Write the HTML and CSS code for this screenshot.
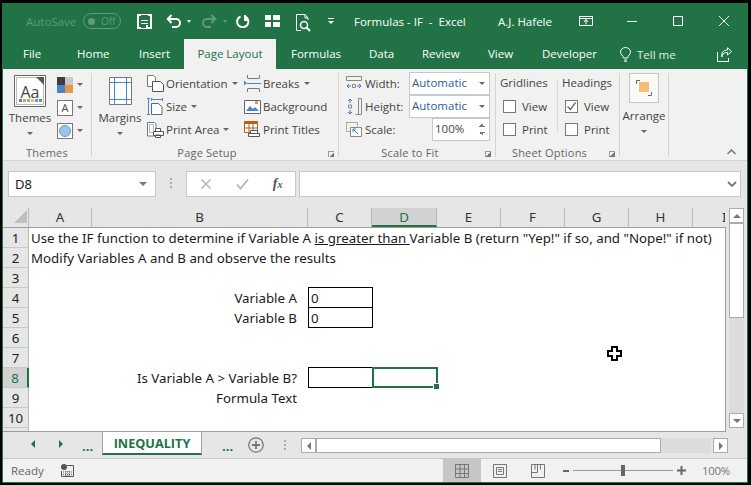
FILE: index.html
```html
<!DOCTYPE html>
<html lang="en">
  <head>
    <meta charset="UTF-8" />
    <title>Formulas - IF - Excel</title>
    <link rel="stylesheet" href="styles.css">
  </head>
  <body>
    <div class="window">
      <div class="titlebar">
        <span class="autosave">AutoSave</span>
        <span class="toggle"><i></i>Off</span>
        <svg class="q q-save" width="15" height="15" viewBox="0 0 15 15"><path d="M1 1h13v13H1z" fill="none" stroke="#fff" stroke-width="2"/><path d="M4 1h7v5H4zM4 10h7v4H4z" fill="#217346"/><path d="M4 6h7v1H4zM4 9h7v1H4zM9 11h2v3H9z" fill="#fff"/></svg>
        <svg class="q q-undo" width="15" height="14" viewBox="0 0 15 14"><path d="M2 5h8a3.500 3.500 0 0 1 0 8H6M5.500 1 1.800 5l3.700 4" fill="none" stroke="#fff" stroke-width="2"/></svg>
        <span class="qcaret"></span>
        <svg class="q q-redo" width="15" height="14" viewBox="0 0 15 14"><path d="M13 5H5a3.500 3.500 0 0 0 0 8h4M9.500 1l3.700 4-3.700 4" fill="none" stroke="#5f9a7b" stroke-width="2"/></svg>
        <span class="qcaret dim"></span>
        <svg class="q q-repeat" width="14" height="14" viewBox="0 0 14 14"><path d="M4.500 2.500a5.600 5.600 0 1 0 4.500 0M9 1v5h4" fill="none" stroke="#fff" stroke-width="2"/></svg>
        <svg class="q q-form" width="15" height="12" viewBox="0 0 15 12"><path d="M0 0h6v5H0zM8 0h7v5H8zM0 7h6v5H0zM8 7h7v5H8z" fill="#fff"/></svg>
        <svg class="q q-preview" width="15" height="18" viewBox="0 0 15 18"><path d="M9 .5H.5v16H5M9 .5 12 4v2M9 .5V4h3" fill="none" stroke="#fff"/><circle cx="8" cy="11" r="3.500" fill="none" stroke="#fff" stroke-width="1.500"/><path d="m10.500 13.500 3.500 3.500" stroke="#fff" stroke-width="2"/></svg>
        <span class="qmore"></span>
        <span class="doc">Formulas - IF&nbsp; -&nbsp; Excel</span>
        <span class="user">A.J. Hafele</span>
        <svg class="q q-display" width="14" height="10" viewBox="0 0 14 10"><path d="M.5.500h13v9H.5zM.5 2.500h13" fill="none" stroke="#fff"/><path d="M7 3.500v5M5 6l2-2.500L9 6" fill="none" stroke="#fff"/></svg>
        <svg class="q q-min" width="10" height="10" viewBox="0 0 10 10"><path d="M0 5.500h10" stroke="#fff"/></svg>
        <svg class="q q-max" width="10" height="10" viewBox="0 0 10 10"><path d="M.5.500h9v9h-9z" fill="none" stroke="#fff"/></svg>
        <svg class="q q-close" width="10" height="10" viewBox="0 0 10 10"><path d="m0 0 10 10M10 0 0 10" stroke="#fff"/></svg>
      </div>

      <div class="tabs">
        <span class="tab tab-file">File</span>
        <span class="tab tab-home">Home</span>
        <span class="tab tab-insert">Insert</span>
        <span class="tab active">Page Layout</span>
        <span class="tab tab-formulas">Formulas</span>
        <span class="tab tab-data">Data</span>
        <span class="tab tab-review">Review</span>
        <span class="tab tab-view">View</span>
        <span class="tab tab-dev">Developer</span>
        <svg class="bulb" width="11" height="15" viewBox="0 0 11 15"><path d="M3.500 11C3 8.500.5 7.500.5 5a5 4.500 0 0 1 10 0c0 2.500-2.500 3.500-3 6zM4 13h3M4.500 14.500h2" fill="none" stroke="#fff"/></svg>
        <span class="tellme">Tell me</span>
        <svg class="share" width="15" height="15" viewBox="0 0 15 15"><path d="M.5 5v9.500h11V11M5 10c0-3 2-4.500 5.500-4.500V8L14.500 4.500 10.500.8V3C6 3 4 6 5 10z" fill="none" stroke="#fff"/></svg>
      </div>

      <div class="ribbon">
        <section class="group g-themes">
          <div class="group-body">
            <div class="big b-themes">
              <svg class="aa" width="32" height="32" viewBox="0 0 32 32"><path d="M.5.500h31v31H.5z" fill="#fff" stroke="#666"/><path d="M2.500 2.500h27v27h-27z" fill="#fff" stroke="#bbb"/><path d="M22 2h8v8z" fill="#555"/><path d="M5 24h3v3H5z" fill="#4a86c5"/><path d="M9 24h3v3H9z" fill="#e59a46"/><path d="M13 24h3v3h-3z" fill="#a5a5a5"/><path d="M17 24h3v3h-3z" fill="#f4c542"/><path d="M21 24h3v3h-3z" fill="#5b9bd5"/><path d="M25 24h3v3h-3z" fill="#5ca85c"/></svg>
              <span class="aa-text">Aa</span>
              <span class="big-label">Themes</span>
              <span class="caret"></span>
            </div>
            <div class="theme-opts">
              <div class="theme-opt"><svg width="16" height="16" viewBox="0 0 16 16"><path d="M0 0h8v8H0z" fill="#3f3f3f"/><path d="M8 0h8v8H8z" fill="#c8c8c8"/><path d="M0 8h8v8H0z" fill="#4a86c5"/><path d="M8 8h8v8H8z" fill="#e59a46"/></svg><span class="caret"></span></div>
              <div class="theme-opt"><span class="font-box">A</span><span class="caret"></span></div>
              <div class="theme-opt"><span class="effect-box"><i></i></span><span class="caret"></span></div>
            </div>
          </div>
          <div class="group-label">Themes</div>
        </section>

        <section class="group g-setup">
          <div class="group-body">
            <div class="big b-margins">
              <svg width="23" height="28" viewBox="0 0 23 28"><path d="M.5.500h22v27H.5z" fill="#fff" stroke="#777"/><path d="M5.500 0v28M17.500 0v28M0 5.500h23M0 22.500h23" stroke="#4a86c5"/></svg>
              <span class="big-label">Margins</span>
              <span class="caret"></span>
            </div>
            <div class="setup-col c-one">
              <div class="item"><svg width="17" height="17" viewBox="0 0 17 17"><path d="M.5.500h6l2 2v9H.5z" fill="#fff" stroke="#777"/><path d="M5.500 6.500h8l3 3v7h-11z" fill="#fff" stroke="#555"/></svg><span>Orientation</span><span class="caret"></span></div>
              <div class="item"><svg width="17" height="17" viewBox="0 0 17 17"><path d="M1.500 1v15M0 .5h3M0 16.500h3M4.500 1.500h11M4.500 0v3M15.500 0v3" stroke="#4a86c5" fill="none"/><path d="M4.500 5.500h7l3.500 3.500v7.500H4.500z" fill="#fff" stroke="#666"/></svg><span>Size</span><span class="caret"></span></div>
              <div class="item"><svg width="17" height="17" viewBox="0 0 17 17"><path d="M.5 1.500h7l1.500 1.500v12H.5z" fill="#fff" stroke="#777"/><path d="M2.500 3.500h4v8h-4z" fill="none" stroke="#4a86c5" stroke-dasharray="1 1"/><path d="M8.500 7.500h5v3h-5zM6.500 10.500h10v4h-10zM8.500 14h5v2.500h-5z" fill="#fff" stroke="#555"/></svg><span>Print Area</span><span class="caret"></span></div>
            </div>
            <div class="setup-col c-two">
              <div class="item"><svg width="17" height="17" viewBox="0 0 17 17"><path d="M3.500 0v3M15.500 0v3M3.500 3.500h12M3.500 13.500h12M3.500 14v3M15.500 14v3" stroke="#777" fill="none"/><path d="M0 5.500 3 8 0 10.500z" fill="#4a86c5"/><path d="M3 8.500h14" stroke="#4a86c5"/></svg><span>Breaks</span><span class="caret"></span></div>
              <div class="item"><svg width="17" height="14" viewBox="0 0 17 14"><path d="M.5.500h16v13H.5z" fill="#fff" stroke="#666"/><path d="m2 11 4-5 3 3 2-2 4 4z" fill="#4a86c5"/><path d="M11 1h3v3h-3z" fill="#e59a46"/></svg><span>Background</span></div>
              <div class="item"><svg width="17" height="17" viewBox="0 0 17 17"><path d="M.5.500h13v11H.5z" fill="#fff" stroke="#a5622a"/><path d="M0 0h14v3H0z" fill="#c55a11"/><path d="M5 3v8M9 3v8M0 7h13" stroke="#a5622a"/><path d="M6.500 9.500h7v3h-7zM4.500 12.500h11v3h-11z" fill="#fff" stroke="#555"/></svg><span>Print Titles</span></div>
            </div>
          </div>
          <div class="group-label">Page Setup</div>
          <span class="launcher"></span>
        </section>

        <section class="group g-scale">
          <div class="group-body scale-rows">
            <div class="scale-row">
              <svg width="16" height="15" viewBox="0 0 16 15"><path d="M.5.500h15v4M.5.500v4h15" fill="none" stroke="#888"/><path d="M1 10h4M11 10h4M1 10l2-2M1 10l2 2M15 10l-2-2M15 10l-2 2" stroke="#3f7ec0" fill="none"/><path d="M6.500 8.500h3v3h-3z" fill="none" stroke="#888"/></svg>
              <span class="scale-label">Width:</span>
              <span class="combo">Automatic<i class="caret"></i></span>
            </div>
            <div class="scale-row">
              <svg width="16" height="17" viewBox="0 0 16 17"><path d="M12.500.500v16h-3M12.500.500h3v16h-3" fill="none" stroke="#888"/><path d="M4 1v4M4 12v4M4 1 2 3M4 1l2 2M4 16l-2-2M4 16l2-2" stroke="#3f7ec0" fill="none"/><path d="M2.500 7h3v3h-3z" fill="none" stroke="#888"/></svg>
              <span class="scale-label">Height:</span>
              <span class="combo">Automatic<i class="caret"></i></span>
            </div>
            <div class="scale-row">
              <svg width="16" height="15" viewBox="0 0 16 15"><path d="M.5.500h11v9H.5z" fill="none" stroke="#888" stroke-dasharray="2 1"/><path d="M4.500 5.500h11v9h-11z" fill="#fff" stroke="#888"/><path d="m7 7 5 5M7 7v3M7 7h3" stroke="#3f7ec0" fill="none"/></svg>
              <span class="scale-label">Scale:</span>
              <span class="combo spin">100%<i class="spin-btn"></i></span>
            </div>
          </div>
          <div class="group-label">Scale to Fit</div>
          <span class="launcher"></span>
        </section>

        <section class="group g-sheet">
          <div class="group-body sheet-cols">
            <div class="sheet-col">
              <div class="sheet-head">Gridlines</div>
              <div class="check"><i></i>View</div>
              <div class="check"><i></i>Print</div>
            </div>
            <div class="sheet-col second">
              <div class="sheet-head">Headings</div>
              <div class="check on"><i><svg width="11" height="11" viewBox="0 0 11 11"><path d="m1.500 5.500 3 3 5-7" fill="none" stroke="#666" stroke-width="1.300"/></svg></i>View</div>
              <div class="check"><i></i>Print</div>
            </div>
          </div>
          <div class="group-label">Sheet Options</div>
          <span class="launcher"></span>
        </section>

        <section class="group g-arrange">
          <div class="group-body arrange">
            <div class="arrange-btn">
              <svg width="16" height="16" viewBox="0 0 16 16"><path d="M4 .5H.5V4M15.500 12v3.500H12" fill="none" stroke="#666"/><path d="M3 2h10v10H3z" fill="#f4bf75"/></svg>
            </div>
            <span class="big-label">Arrange</span>
            <span class="caret"></span>
          </div>
          <div class="group-label">&nbsp;</div>
        </section>

        <svg class="collapse" width="9" height="6" viewBox="0 0 9 6"><path d="m.5 5 4-4 4 4" fill="none" stroke="#777" stroke-width="1.500"/></svg>
      </div>

      <div class="formula-area">
        <div class="namebox">D8<i class="caret"></i></div>
        <span class="grip"></span>
        <div class="fx-box">
          <svg width="12" height="12" viewBox="0 0 12 12"><path d="m1.500 1.500 9 9M10.500 1.500l-9 9" stroke="#b5b5b5" stroke-width="1.500"/></svg>
          <svg width="13" height="12" viewBox="0 0 13 12"><path d="m1 6.500 3.500 4L12 1.500" fill="none" stroke="#b5b5b5" stroke-width="1.800"/></svg>
          <span class="fx">f<small>x</small></span>
        </div>
        <div class="formula-input">
          <svg width="10" height="6" viewBox="0 0 10 6"><path d="m1 1 4 4 4-4" fill="none" stroke="#777" stroke-width="1.800"/></svg>
        </div>
      </div>

      <div class="sheet-area">
        <div class="sheet">
          <div class="col-heads">
            <div class="corner"><svg width="13" height="13" viewBox="0 0 13 13"><path d="M13 0v13H0z" fill="#bfbfbf"/></svg></div>
            <div class="col w-a">A</div>
            <div class="col w-b">B</div>
            <div class="col w-c">C</div>
            <div class="col w-d sel">D</div>
            <div class="col w-e">E</div>
            <div class="col w-e">F</div>
            <div class="col w-e">G</div>
            <div class="col w-e">H</div>
            <div class="col w-i">I</div>
          </div>
          <div class="rows">
            <div class="row"><div class="num">1</div><div class="text">Use the IF function to determine if Variable A <u>is greater than </u>Variable B (return "Yep!" if so, and "Nope!" if not)</div></div>
            <div class="row"><div class="num">2</div><div class="text">Modify Variables A and B and observe the results</div></div>
            <div class="row"><div class="num">3</div></div>
            <div class="row"><div class="num">4</div><div class="lbl">Variable A</div><div class="box">0</div></div>
            <div class="row"><div class="num">5</div><div class="lbl">Variable B</div><div class="box next">0</div></div>
            <div class="row"><div class="num">6</div></div>
            <div class="row"><div class="num">7</div></div>
            <div class="row"><div class="num sel">8</div><div class="lbl">Is Variable A &gt; Variable B?</div><div class="box"></div><div class="active-cell"><i></i></div></div>
            <div class="row"><div class="num">9</div><div class="lbl">Formula Text</div></div>
            <div class="row"><div class="num">10</div></div>
            <div class="row short"><div class="num"></div></div>
          </div>
          <svg class="pointer" width="15" height="15" viewBox="0 0 15 15"><path d="M5 1h5v4h4v5h-4v4H5v-4H1V5h4z" fill="#fff" stroke="#000" stroke-width="2"/></svg>
        </div>
        <div class="vscroll">
          <div class="sb-btn"><i class="tri up"></i></div>
          <div class="sb-thumb"></div>
          <div class="sb-track"></div>
          <div class="sb-btn"><i class="tri down"></i></div>
        </div>
      </div>

      <div class="sheet-tabs">
        <i class="tri left green nav1"></i>
        <i class="tri right green nav2"></i>
        <span class="dots d1">...</span>
        <span class="sheet-tab">INEQUALITY</span>
        <span class="dots d2">...</span>
        <svg class="plus" width="16" height="16" viewBox="0 0 16 16"><circle cx="8" cy="8" r="7.200" fill="none" stroke="#777" stroke-width="1.300"/><path d="M8 4v8M4 8h8" stroke="#777" stroke-width="1.800"/></svg>
        <span class="grip g2"></span>
        <div class="hscroll">
          <div class="sb-btn"><i class="tri left"></i></div>
          <div class="h-thumb"></div>
          <div class="h-track"></div>
          <div class="sb-btn"><i class="tri right"></i></div>
        </div>
      </div>

      <div class="status">
        <span class="ready">Ready</span>
        <svg class="macro" width="13" height="13" viewBox="0 0 13 13"><circle cx="3" cy="3" r="3" fill="#555"/><path d="M6 1.500h6.500v11H.5V7" fill="none" stroke="#555"/><path d="M2 8h10M2 10.500h10M5 7v5M8 7v5" stroke="#555" stroke-dasharray="1 1"/></svg>
        <div class="views">
          <span class="view on"><svg width="14" height="14" viewBox="0 0 14 14"><path d="M.5.500h13v13H.5zM.5 5h13M.5 9.500h13M5 .5v13M9.500.5v13" fill="none" stroke="#777"/></svg></span>
          <span class="view"><svg width="14" height="14" viewBox="0 0 14 14"><path d="M.5.500h13v13H.5z" fill="none" stroke="#777"/><path d="M3.500 3.500h7v7h-7zM5 5.500h4M5 7.500h4" fill="none" stroke="#777"/></svg></span>
          <span class="view"><svg width="14" height="14" viewBox="0 0 14 14"><path d="M.5.500h13v13H.5zM.5 8.500h6V.5M4 .5v5M9.500.5v5" fill="none" stroke="#777"/></svg></span>
        </div>
        <div class="zoom">
          <i class="minus"></i>
          <div class="slider"><i></i></div>
          <svg width="9" height="9" viewBox="0 0 9 9"><path d="M0 4.500h9M4.500 0v9" stroke="#666" stroke-width="2"/></svg>
          <span class="pct">100%</span>
        </div>
      </div>
    </div>
  </body>
</html>
```

FILE: styles.css
```css
* {
  box-sizing: border-box;
}
html,
body {
  margin: 0;
  height: 485px;
  background: #000;
  overflow: hidden;
}
.window {
  width: 746px;
  height: 480px;
  margin: 3px 0 0 2px;
  display: flex;
  flex-direction: column;
  background: #e6e6e6;
  border-left: 1px solid #217346;
  border-right: 1px solid #217346;
  border-bottom: 1px solid #217346;
  font-family: "Open Sans", "Noto Sans", sans-serif;
  font-size: 11.500px;
  color: #444;
}
svg {
  display: block;
  flex: none;
}

/* title bar */
.titlebar {
  height: 36px;
  flex: none;
  display: flex;
  align-items: center;
  background: #217346;
  color: #fff;
  padding-left: 23px;
}
.autosave {
  color: #5f9a7b;
  width: 57px;
}
.toggle {
  width: 38px;
  height: 16px;
  border: 1px solid #5f9a7b;
  border-radius: 8px;
  color: #5f9a7b;
  font-size: 10px;
  line-height: 14px;
  display: flex;
  align-items: center;
  gap: 6px;
  padding-left: 4px;
}
.toggle i {
  width: 7px;
  height: 7px;
  border-radius: 50%;
  background: #5f9a7b;
}
.q-save { margin-left: 16px; }
.q-undo { margin-left: 14px; }
.q-redo { margin-left: 11px; }
.q-repeat { margin-left: 9px; }
.q-form { margin-left: 15px; }
.q-preview { margin-left: 16px; margin-top: 3px; }
.qcaret {
  margin-left: 6px;
  border-top: 3px solid #dfe;
  border-left: 2.5px solid transparent;
  border-right: 2.5px solid transparent;
}
.qcaret.dim { border-top-color: #5f9a7b; }
.qmore {
  margin-left: 17px;
  width: 6px;
  height: 6px;
  border-top: 1px solid #fff;
  position: relative;
}
.qmore::after {
  content: "";
  display: block;
  margin-top: 2px;
  border-top: 3px solid #fff;
  border-left: 3px solid transparent;
  border-right: 3px solid transparent;
}
.doc {
  margin-left: 20px;
  width: 144px;
}
.user { width: 81px; }
.q-min { margin-left: 34px; }
.q-max { margin-left: 36px; }
.q-close { margin-left: 36px; }

/* ribbon tabs */
.tabs {
  height: 30px;
  flex: none;
  display: flex;
  align-items: center;
  background: #217346;
  color: #fff;
  padding-top: 0;
}
.tab { display: block; line-height: 30px; }
.tab-file { margin-left: 20px; width: 54px; }
.tab-home { width: 62px; }
.tab-insert { width: 45px; }
.tab.active {
  width: 92px;
  background: #f1f1f1;
  color: #217346;
  text-align: center;
}
.tab-formulas { margin-left: 15px; width: 78px; }
.tab-data { width: 53px; }
.tab-review { width: 66px; }
.tab-view { width: 54px; }
.tab-dev { width: 78px; }
.bulb { margin-right: 6px; }
.tellme { width: 80px; color: #e3efe8; }

/* ribbon */
.ribbon {
  height: 92px;
  flex: none;
  display: flex;
  background: #f1f1f1;
  border-bottom: 1px solid #d4d4d4;
  position: relative;
}
.group {
  position: relative;
  display: flex;
  flex-direction: column;
  height: 84px;
  margin-top: 4px;
  border-right: 1px solid #d4d4d4;
}
.g-themes { width: 89px; }
.g-setup { width: 247px; }
.g-scale { width: 157px; }
.g-sheet { width: 124px; }
.g-arrange { width: 49px; }
.group-body {
  flex: 1;
  display: flex;
  min-height: 0;
}
.group-label {
  height: 14px;
  margin-bottom: -3px;
  text-align: center;
  font-size: 11px;
  letter-spacing: 0.2px;
  color: #666;
  line-height: 14px;
}
.g-setup .group-label { padding-right: 16px; }
.g-scale .group-label { padding-right: 14px; }
.g-sheet .group-label { padding-right: 16px; }
.launcher {
  position: absolute;
  right: 4px;
  bottom: 0;
  width: 6px;
  height: 6px;
  border-left: 1px solid #999;
  border-top: 1px solid #999;
  background: linear-gradient(135deg, transparent 50%, #777 50%);
}
.caret {
  display: block;
  border-top: 3px solid #666;
  border-left: 3px solid transparent;
  border-right: 3px solid transparent;
}
.big {
  display: flex;
  flex-direction: column;
  align-items: center;
  position: relative;
}
.big-label { line-height: 16px; }
.b-themes {
  width: 42px;
  margin-left: 6px;
  padding-top: 2px;
}
.b-themes .big-label { margin-top: 3px; }
.b-themes .caret { margin-top: 6px; }
.aa-text {
  position: absolute;
  top: 8px;
  left: 0;
  width: 42px;
  text-align: center;
  font-size: 16px;
  line-height: 22px;
  color: #444;
}
.theme-opts {
  display: flex;
  flex-direction: column;
  margin-left: 6px;
}
.theme-opt {
  height: 23px;
  display: flex;
  align-items: center;
  gap: 4px;
}
.font-box,
.effect-box {
  width: 16px;
  height: 16px;
  border: 1px solid #777;
  background: #fff;
  color: #444;
  font-size: 11px;
  line-height: 14px;
  text-align: center;
}
.font-box {
  box-shadow: inset 0 -2px 0 #fff;
}
.effect-box {
  display: flex;
  align-items: center;
  justify-content: center;
}
.effect-box i {
  width: 12px;
  height: 12px;
  border-radius: 50%;
  background: #9dc3e6;
  border: 1px solid #5b9bd5;
}
.b-margins {
  width: 50px;
  margin-left: 3px;
  padding-top: 4px;
}
.b-margins .big-label { margin-top: 5px; }
.b-margins .caret { margin-top: 6px; }
.setup-col {
  display: flex;
  flex-direction: column;
  margin-top: -1px;
}
.c-one { width: 97px; margin-left: 2px; }
.c-two { width: 90px; }
.item {
  height: 23px;
  display: flex;
  align-items: center;
  gap: 2px;
  white-space: nowrap;
}
.item .caret { margin-left: 2px; }
.scale-rows {
  flex-direction: column;
  padding-left: 7px;
  margin-top: -1px;
}
.scale-row {
  height: 23px;
  display: flex;
  align-items: center;
}
.scale-label {
  margin-left: 3px;
  width: 44px;
}
.combo {
  width: 81px;
  height: 23px;
  background: #fff;
  border: 1px solid #c8c8c8;
  padding-left: 2px;
  line-height: 20px;
  color: #2c5d92;
  position: relative;
}
.combo .caret {
  position: absolute;
  right: 4px;
  top: 9px;
}
.combo.spin {
  width: 58px;
  margin-left: 23px;
  color: #444;
}
.spin-btn {
  position: absolute;
  right: 4px;
  top: 5px;
  height: 11px;
  width: 6px;
  background:
    linear-gradient(to top left, #777 50%, transparent 50%) 0 0 / 3px 3px no-repeat,
    linear-gradient(to top right, #777 50%, transparent 50%) 3px 0 / 3px 3px no-repeat,
    linear-gradient(to bottom left, #777 50%, transparent 50%) 0 8px / 3px 3px no-repeat,
    linear-gradient(to bottom right, #777 50%, transparent 50%) 3px 8px / 3px 3px no-repeat;
}
.sheet-cols {
  padding-left: 4px;
  margin-top: -1px;
}
.sheet-col {
  width: 57px;
  display: flex;
  flex-direction: column;
}
.sheet-head {
  height: 23px;
  line-height: 22px;
}
.check {
  height: 23px;
  display: flex;
  align-items: center;
  padding-left: 3px;
  gap: 6px;
}
.check i {
  width: 13px;
  height: 13px;
  border: 1px solid #777;
  background: #fff;
  display: block;
}
.sheet-col.second {
  position: relative;
  width: 62px;
  padding-left: 5px;
}
.sheet-col.second::before {
  content: "";
  position: absolute;
  left: 0;
  top: 8px;
  height: 53px;
  border-left: 1px solid #d8d8d8;
}
.arrange {
  flex-direction: column;
  align-items: center;
}
.arrange-btn {
  width: 30px;
  height: 30px;
  background: #f9f9f9;
  border: 1px solid #c6c6c6;
  display: flex;
  align-items: center;
  justify-content: center;
}
.arrange .big-label { margin-top: 5px; }
.arrange .caret { margin-top: 6px; }
.collapse {
  position: absolute;
  right: 11px;
  bottom: 5px;
}

/* formula bar */
.formula-area {
  height: 44px;
  flex: none;
  display: flex;
  align-items: flex-start;
  padding: 10px 6px 0 5px;
}
.namebox {
  width: 148px;
  height: 26px;
  background: #fff;
  border: 1px solid #c6c6c6;
  padding-left: 6px;
  line-height: 24px;
  font-family: "Noto Sans", sans-serif;
  font-size: 13px;
  color: #222;
  position: relative;
}
.namebox .caret {
  position: absolute;
  right: 8px;
  top: 10px;
  border-top: 4px solid #777;
  border-left: 4px solid transparent;
  border-right: 4px solid transparent;
}
.grip {
  width: 2px;
  height: 11px;
  margin: 7px 14px 0 14px;
  background: linear-gradient(#aaa 2px, transparent 2px) 0 0 / 2px 4px;
}
.fx-box {
  width: 110px;
  height: 26px;
  background: #fff;
  border: 1px solid #c6c6c6;
  display: flex;
  align-items: center;
  padding-left: 13px;
  gap: 24px;
}
.fx {
  font-family: "Liberation Serif", serif;
  font-style: italic;
  font-size: 14px;
  color: #555;
  font-weight: bold;
}
.fx small { font-size: 10px; }
.formula-input {
  width: 443px;
  height: 26px;
  margin-left: 3px;
  background: #fff;
  border: 1px solid #c6c6c6;
  display: flex;
  align-items: center;
  justify-content: flex-end;
  padding-right: 3px;
}

/* grid */
.sheet-area {
  height: 226px;
  flex: 1;
  display: flex;
  align-items: flex-start;
}
.sheet {
  width: 723px;
  position: relative;
  font-family: "Noto Sans", sans-serif;
  font-size: 13.300px;
  color: #1a1a1a;
}
.col-heads {
  height: 23px;
  display: flex;
  padding-top: 3px;
  border-bottom: 1px solid #9e9e9e;
  background: #e6e6e6;
}
.corner {
  width: 26px;
  border-right: 1px solid #bbb;
  padding: 2px 0 0 11px;
}
.col {
  text-align: center;
  border-right: 1px solid #bbb;
  line-height: 19px;
  color: #333;
}
.w-a { width: 63px; }
.w-b { width: 216px; }
.w-c { width: 64px; }
.w-d { width: 65px; }
.w-e { width: 64px; }
.w-i {
  width: 32px;
  border-right: 0;
  text-align: left;
  padding-left: 29px;
  overflow: hidden;
}
.col.sel {
  background: #d2d2d2;
  color: #217346;
  border-bottom: 2px solid #217346;
}
.rows {
  border-right: 1px solid #9e9e9e;
  border-bottom: 1px solid #9e9e9e;
  background: #fff;
  height: 204px;
  overflow: hidden;
}
.row {
  height: 20px;
  display: flex;
  line-height: 20px;
  white-space: nowrap;
}
.num {
  width: 26px;
  flex: none;
  background: #e6e6e6;
  border-right: 1px solid #bbb;
  border-bottom: 1px solid #c8c8c8;
  text-align: center;
  color: #222;
}
.num.sel {
  background: #d2d2d2;
  color: #217346;
  border-right: 2px solid #217346;
}
.text { padding-left: 2px; }
.lbl {
  width: 278px;
  flex: none;
  text-align: right;
  padding-right: 11px;
  margin-left: 1px;
}
.box {
  width: 65px;
  height: 21px;
  flex: none;
  border: 1px solid #000;
  padding-left: 2px;
  margin-top: -1px;
  line-height: 20px;
  background: #fff;
}
.active-cell {
  width: 66px;
  height: 21px;
  margin: -1px 0 0 -1px;
  border: 2px solid #217346;
  position: relative;
}
.active-cell i {
  position: absolute;
  right: -3px;
  bottom: -3px;
  width: 5px;
  height: 5px;
  background: #217346;
  box-shadow: 0 0 0 1px #fff;
}
.pointer {
  position: absolute;
  left: 604px;
  top: 141px;
}

/* scrollbars */
.sb-btn {
  width: 15px;
  height: 15px;
  flex: none;
  background: #fff;
  border: 1px solid #ababab;
  display: flex;
  align-items: center;
  justify-content: center;
}
.tri { display: block; width: 0; height: 0; }
.tri.up {
  border-bottom: 4px solid #777;
  border-left: 4px solid transparent;
  border-right: 4px solid transparent;
}
.tri.down {
  border-top: 4px solid #777;
  border-left: 4px solid transparent;
  border-right: 4px solid transparent;
}
.tri.left {
  border-right: 4px solid #777;
  border-top: 4px solid transparent;
  border-bottom: 4px solid transparent;
}
.tri.right {
  border-left: 4px solid #777;
  border-top: 4px solid transparent;
  border-bottom: 4px solid transparent;
}
.tri.left.green { border-right-color: #217346; }
.tri.right.green { border-left-color: #217346; }
.vscroll {
  width: 15px;
  height: 220px;
  margin: 3px 0 0 3px;
  display: flex;
  flex-direction: column;
}
.sb-thumb {
  height: 95px;
  background: #fff;
  border: 1px solid #ababab;
}
.sb-track {
  flex: 1;
  background: #dcdcdc;
}

/* sheet tabs */
.sheet-tabs {
  height: 28px;
  flex: none;
  display: flex;
  align-items: flex-start;
  border-bottom: 1px solid #c6c6c6;
}
.nav1 { margin: 9px 0 0 28px; }
.nav2 { margin: 9px 0 0 24px; }
.dots {
  color: #217346;
  font-weight: bold;
  font-size: 13px;
  line-height: 20px;
  margin-top: 5px;
}
.d1 { margin-left: 19px; width: 20px; }
.sheet-tab {
  width: 100px;
  height: 24px;
  background: #fff;
  border: 1px solid #a6a6a6;
  border-top: 0;
  border-bottom: 2px solid #217346;
  color: #217346;
  font-weight: bold;
  font-size: 12.700px;
  text-align: center;
  line-height: 24px;
}
.d2 { margin-left: 20px; width: 25px; }
.plus { margin: 6px 0 0 1px; }
.grip.g2 { margin: 9px 15px 0 20px; }
.hscroll {
  width: 427px;
  height: 15px;
  margin-top: 7px;
  display: flex;
}
.h-thumb {
  width: 345px;
  background: #fff;
  border: 1px solid #ababab;
}
.h-track {
  flex: 1;
  background: #dcdcdc;
  margin-right: 2px;
}

/* status bar */
.status {
  flex: 1;
  min-height: 0;
  display: flex;
  align-items: center;
  background: #f1f1f1;
  color: #666;
  font-size: 11.500px;
  padding-left: 8px;
}
.ready { width: 50px; }
.macro { margin-right: 369px; }
.views { display: flex; height: 100%; }
.view {
  width: 38px;
  display: flex;
  align-items: center;
  justify-content: center;
}
.view.on { background: #c6c6c6; }
.zoom {
  display: flex;
  align-items: center;
  margin-left: 6px;
}
.minus {
  display: block;
  width: 6px;
  height: 2px;
  background: #666;
}
.slider {
  width: 100px;
  height: 1px;
  margin: 0 4px;
  background: #999;
  position: relative;
}
.slider i {
  position: absolute;
  left: 48px;
  top: -5px;
  width: 4px;
  height: 11px;
  background: #666;
}
.pct {
  margin-left: 16px;
  font-size: 11.500px;
  letter-spacing: -0.300px;
  color: #777;
}
```
